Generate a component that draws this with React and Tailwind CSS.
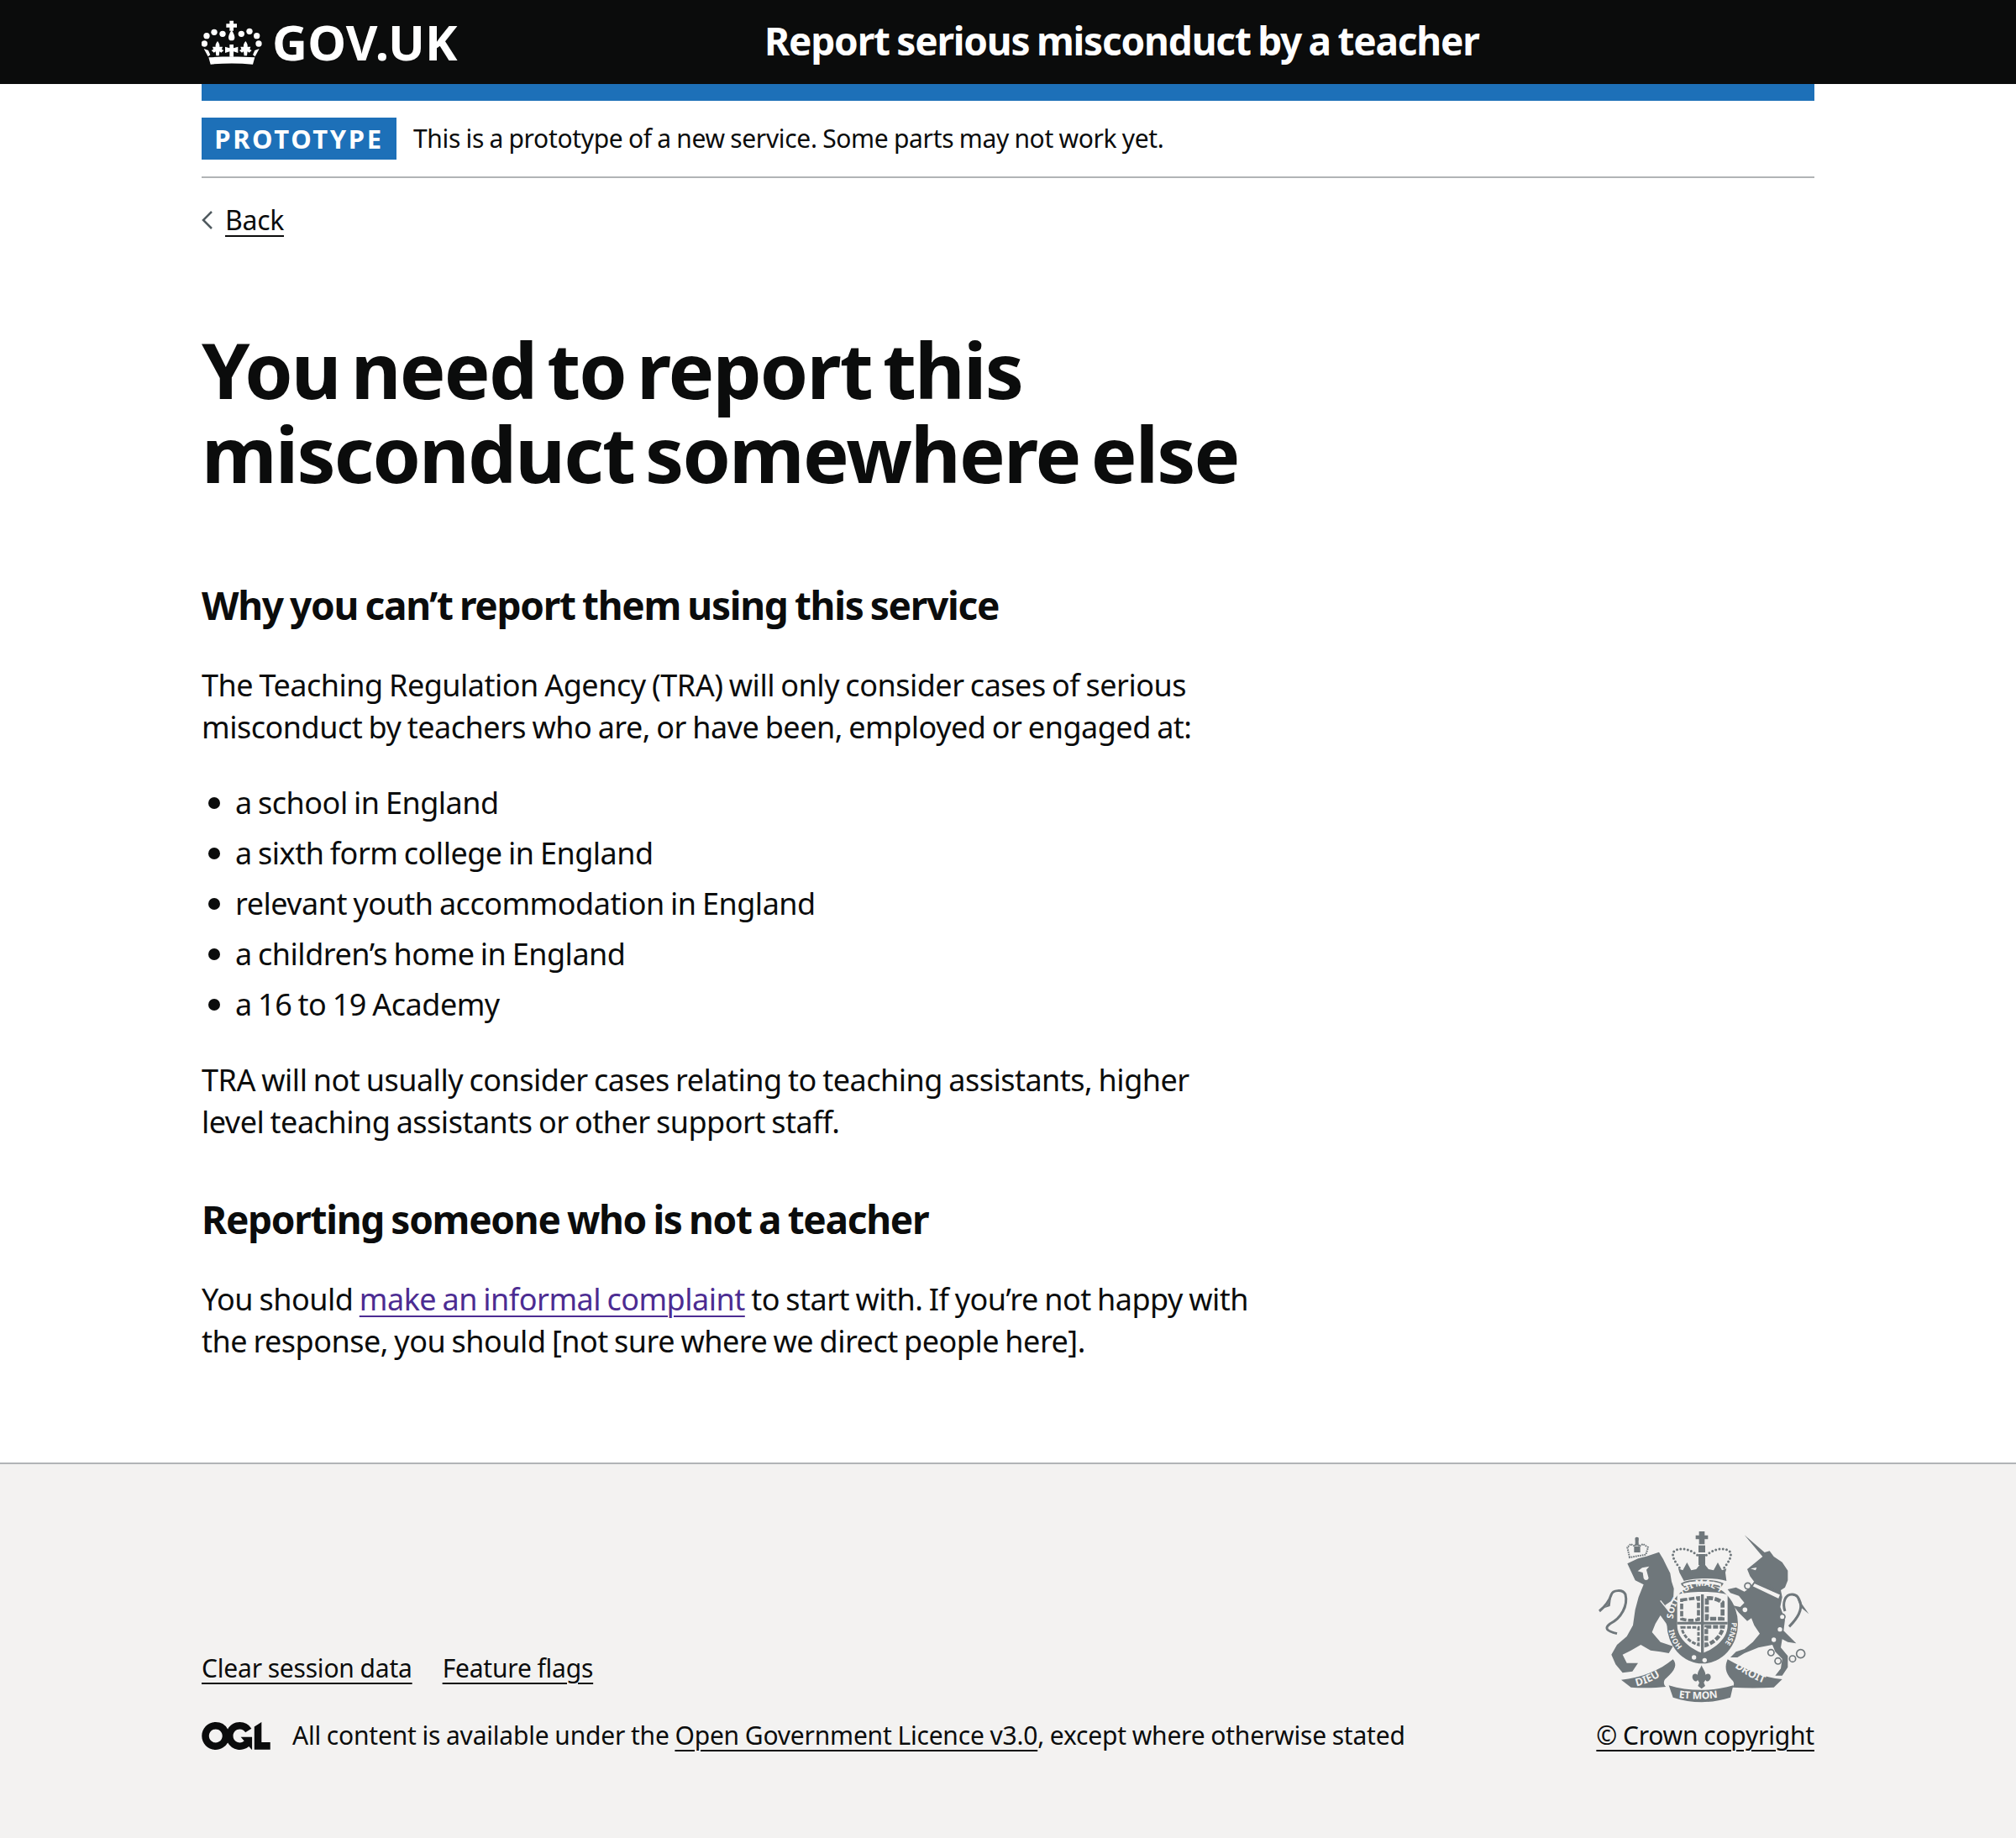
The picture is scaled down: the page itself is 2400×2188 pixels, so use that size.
const font = "font-['Noto_Sans','Open_Sans',sans-serif]";

function Crown() {
  return (
    <svg viewBox="60 60 216 165" className="w-[72px] h-[55px] shrink-0" fill="#fff">
      <path d="M160 65h14v11h12v13h-12v12h-14v-12h-12v-13h12z" />
      <path d="M167 98c8 12 11 20 11 27a11 11 0 0 1-22 0c0-7 3-15 11-27z" />
      <circle cx="78" cy="119" r="11" />
      <circle cx="105" cy="106" r="11" />
      <circle cx="135" cy="112" r="11" />
      <circle cx="202" cy="112" r="11" />
      <circle cx="231" cy="103" r="11" />
      <circle cx="257" cy="119" r="11" />
      <circle cx="70" cy="147" r="11" />
      <circle cx="264" cy="147" r="11" />
      {/* three fleurs */}
      <path d="M160 150h14v13l16-5v22l-16-5v19h-14v-19l-16 5v-22l16 5z" />
      <path d="M117 138c6 8 8 13 7 20l11 0-3 9 7 4-9 8-6-4-2 15h-10l-2-15-6 4-9-8 7-4-3-9 11 0c-1-7 1-12 7-20z" />
      <path d="M217 138c6 8 8 13 7 20l11 0-3 9 7 4-9 8-6-4-2 15h-10l-2-15-6 4-9-8 7-4-3-9 11 0c-1-7 1-12 7-20z" />
      {/* side leaves */}
      <path d="M68 165l16 6 7 16-8 6z" />
      <path d="M266 165l-16 6-7 16 8 6z" />
      {/* base */}
      <path d="M85 196c50-3 115-3 165 0l-7 25c-50-5-100-5-151 0z" />
    </svg>
  );
}

function OglLogo() {
  return (
    <svg viewBox="0 0 483.2 195.7" className="w-[82px] h-[33px] shrink-0" fill="#0b0c0c">
      <path d="M421.5 142.8V.1l-50.7 32.3v161.1h112.4v-50.7zm-122.3-9.6A47.12 47.12 0 0 1 221 97.8c0-26 21.1-47.1 47.1-47.1 16.7 0 31.4 8.7 39.7 21.8l42.7-27.2A97.63 97.63 0 0 0 268.1 0c-36.5 0-68.3 20.1-85.1 49.7A98 98 0 0 0 97.8 0C43.9 0 0 43.9 0 97.8s43.9 97.8 97.8 97.8c36.5 0 68.3-20.1 85.1-49.7a97.76 97.76 0 0 0 149.6 25.4l19.4 22.2h3v-87.8h-80l24.3 27.5zM97.8 145c-26 0-47.1-21.1-47.1-47.1s21.1-47.1 47.1-47.1 47.2 21 47.2 47S123.8 145 97.8 145" />
    </svg>
  );
}

// royal coat of arms, drawn roughly in the crop's coordinates
function Crest() {
  const dark = "#6f777b";
  const light = "#f3f2f1";
  return (
    <svg viewBox="60 60 780 630" className="w-[260px] h-[210px]" fill={dark}>
      <defs>
        <path id="garterTop" d="M335 395a105 125 0 0 1 210 0" />
        <path id="garterRight" d="M545 395a105 125 0 0 1-50 106" />
        <path id="garterLeft" d="M375 493a105 125 0 0 1-40-98" />
        <path id="ribLeft" d="M205 628c40-10 80-28 118-60" />
        <path id="ribRight" d="M555 560c40 28 75 48 118 62" />
        <path id="ribMid" d="M350 668c55 8 115 8 175-4" />
      </defs>

      {/* lion */}
      <path d="M172 190l38-18 30-8 45-15 15 25 12 25 13 25 5 30 8 25-2 40-30 20 30 45 16 35-6 22-22-8-14-30-20-28-18 30-12 30 30 35 45 15-15 25-30-5-35-5-35-20-35 20-30 15 15 30h40l-20 30-35 5-25-30-15-35 20-35 35-30 22-40 8-55 12-45 18-45-30-15z" />
      <path d="M135 440c-40-10-45-20-25-35 40-20 65-65 55-105-10-20-45-15-50 0-8 25-25 45-43 60" fill="none" stroke={dark} strokeWidth="9" />
      <path d="M80 352c15-5 28-20 35-50l-5 40z" />
      <path d="M225 205l25-5-10 12 8 30a10 12 0 0 1-18 0l-3-20-18-5z" fill={light} />
      <path d="M290 322l40 50" stroke={light} strokeWidth="4" />
      <path d="M180 168l-8-36 12-12 14 8 8-14 8 14 14-8 18 12-8 26z" fill="none" stroke={dark} strokeWidth="6" strokeDasharray="5 3" />
      <path d="M200 105h12v20h-12zM196 150h22v-22h-22z" />
      <circle cx="206" cy="102" r="7" />

      {/* crown over the shield */}
      <path d="M428 75h20v14h12v14h-12v18h-20v-18h-12v-14h12z" />
      <path d="M426 125h24v70h-24z" />
      <path d="M425 150h26v6h-26z" fill={light} />
      <path d="M358 205c-15-20-35-50-15-62 30-13 60 0 85 22M518 205c15-20 35-50 15-62-30-13-60 0-85 22" fill="none" stroke={dark} strokeWidth="9" strokeLinecap="round" strokeDasharray="0 13" />
      <path d="M358 222l-4-14 16 6 15-28 15 28 18-4 22-28 22 28 18 4 15-28 15 28 16-6-4 14 4 30c-40-12-112-12-152 0z" />
      <path d="M366 262c25-16 118-16 146 0l-8 12c-25-12-105-12-130 0z" fill={light} stroke={dark} strokeWidth="5" />

      {/* garter and shield */}
      <ellipse cx="440" cy="405" rx="127" ry="142" />
      <path d="M350 302c30-15 150-15 180 0v108c0 50-50 85-90 100-40-15-90-50-90-100z" fill={light} />
      <path d="M435 300h10v210h-10zM350 398h180v9H350z" />
      <path d="M366 320l60-8v78c-20 4-40 4-60-2z" fill="none" stroke={dark} strokeWidth="11" strokeDasharray="20 6" />
      <path d="M456 314c20-3 40 3 56 15v58h-56z" fill="none" stroke={dark} strokeWidth="14" strokeDasharray="22 6" />
      <path d="M366 418h60v62c-25-6-55-28-60-62z" fill="none" stroke={dark} strokeWidth="9" strokeDasharray="14 5" />
      <path d="M454 416h60c-5 30-30 55-60 65z" fill="none" stroke={dark} strokeWidth="13" strokeDasharray="18 6" />
      <g fill={light} fontFamily="Noto Sans, sans-serif" fontWeight="700" fontSize="32">
        <text><textPath href="#garterTop" startOffset="2%">SOIT QUI MAL Y</textPath></text>
        <text fontSize="26"><textPath href="#garterRight" startOffset="4%">PENSE</textPath></text>
        <text fontSize="26"><textPath href="#garterLeft" startOffset="8%">HONI</textPath></text>
      </g>
      <circle cx="410" cy="525" r="8" fill={light} />
      <circle cx="448" cy="535" r="8" fill={light} />

      {/* unicorn */}
      <path d="M590 88L662 150l18-5 15 20 30 20 20 30v35l-10 25-15 10 5 25-7 35 17 45-5 40 45 45-30-5-20-10-5 30 25 30v40l-20 30h-25l20-25 5-35-25-25-10-25-50 10-50 20-25 15h-25l20-20 30-10 30-25 25-30-20-30-10-25-15 10-30-30-20-25 25 5 15-15-20-25-30-10-10-13 30-7 30 15 15-10 20-25-15-20-10-25 25-20 30-25z" />
      <path d="M612 208l22-4-4 10z" fill={light} />
      <path d="M625 258l95 42-7 18-96-46z" fill={light} stroke={dark} strokeWidth="5" />
      <path d="M640 262l6-10 4 12 8-6 3 12 8-6 3 12 8-6 3 12 8-6 3 12 8-4" fill="none" stroke={dark} strokeWidth="4" />
      <path d="M735 360c-10-30 0-60 25-60 20 0 25 15 30 30 5 20-5 50-40 85" fill="none" stroke={dark} strokeWidth="9" />
      <path d="M775 305l45 65-30-25z" />
      <circle cx="602" cy="270" r="11" fill={light} stroke={dark} strokeWidth="5" />
      <circle cx="592" cy="355" r="11" fill={light} stroke={dark} strokeWidth="5" />
      <circle cx="725" cy="380" r="10" fill={light} stroke={dark} strokeWidth="5" />
      <circle cx="717" cy="425" r="8" fill={light} />
      <circle cx="695" cy="462" r="8" fill={light} />
      <circle cx="685" cy="508" r="11" fill={light} stroke={dark} strokeWidth="5" />
      <circle cx="710" cy="538" r="11" fill={light} stroke={dark} strokeWidth="5" />
      <circle cx="762" cy="530" r="11" fill={light} stroke={dark} strokeWidth="5" />
      <circle cx="791" cy="512" r="15" fill={light} stroke={dark} strokeWidth="5" />

      {/* motto ribbon */}
      <path d="M150 605c70-5 140-35 185-73 15 18 10 38-25 68-10 8-10 22 0 30-40 5-90 5-125 2z" />
      <path d="M725 603c-65-3-135-38-195-71-10 23-10 48 15 73 10 8 10 20 0 27 50 3 100 3 150 0z" />
      <path d="M320 625c70 22 160 22 230 0l-10 43c-70 22-135 22-205 0z" />
      <path d="M437 553c-4 12-14 22-14 34-14-10-26 5-14 20 6 6 12 4 14-2l6 10-5 12 13 10 13-10-5-12 6-10c2 6 8 8 14 2 12-15 0-30-14-20 0-12-10-22-14-34z" />
      <g fill={light} fontFamily="Noto Sans, sans-serif" fontWeight="700" fontSize="38">
        <text><textPath href="#ribLeft">DIEU</textPath></text>
        <text><textPath href="#ribRight">DROIT</textPath></text>
        <text fontSize="36"><textPath href="#ribMid" startOffset="3%">ET MON</textPath></text>
      </g>
    </svg>
  );
}

const items = [
  "a school in England",
  "a sixth form college in England",
  "relevant youth accommodation in England",
  "a children’s home in England",
  "a 16 to 19 Academy",
];

const body = "text-[36px] leading-[50px] tracking-[-0.5px] [word-spacing:-1.5px]";
const subheading = "text-[46px] leading-[60px] font-bold tracking-[-1.3px] [word-spacing:-2.3px]";
const link = "underline decoration-2 underline-offset-[6px]";

export default function App() {
  return (
    <div className={`${font} min-h-[2188px] flex flex-col bg-white text-[#0b0c0c]`}>
      <header className="h-[100px] bg-[#0b0c0c] text-white">
        <div className="w-[1920px] mx-auto h-full flex items-center">
          <div className="w-[670px] flex items-center gap-[12px] shrink-0">
            <Crown />
            <span className="text-[58px] leading-none font-bold tracking-[0.2px]">GOV.UK</span>
          </div>
          <span className="text-[46px] leading-[60px] font-bold tracking-[-1.2px] [word-spacing:-2.3px] relative -top-[2px]">Report serious misconduct by a teacher</span>
        </div>
      </header>

      <div className="w-[1920px] mx-auto h-[20px] bg-[#1d70b8]" />

      <div className="w-[1920px] mx-auto">
        <div className="py-[20px] flex items-center gap-[20px] border-b-2 border-[#b1b4b6]">
          <strong className="h-[50px] w-[232px] bg-[#1d70b8] text-white text-[31px] leading-[50px] text-center font-bold tracking-[2.6px]">PROTOTYPE</strong>
          <span className="text-[30px] leading-[40px] tracking-[-0.32px] [word-spacing:-1px]">This is a prototype of a new service. Some parts may not work yet.</span>
        </div>

        <a className="mt-[30px] flex items-center gap-[14px] text-[32px] leading-[40px] h-[40px] w-fit">
          <svg viewBox="0 0 14 24" className="w-[14px] h-[24px]" fill="none" stroke="#505a5f" strokeWidth="2.5"><path d="M12 2 2 12l10 10" /></svg>
          <span className={`${link} tracking-[-0.3px]`}>Back</span>
        </a>

        <main className="pt-[108px] pb-[119px] w-[1300px]">
          <h1 className="text-[92px] leading-[100px] font-bold tracking-[-1.85px] [word-spacing:-9px] mb-[100px]">
            You need to report this<br />misconduct somewhere else
          </h1>
          <h2 className={`${subheading} mb-[41px]`}>Why you can’t report them using this service</h2>
          <p className={`${body} mb-[40px]`}>
            The Teaching Regulation Agency (TRA) will only consider cases of serious<br />
            misconduct by teachers who are, or have been, employed or engaged at:
          </p>
          <ul className={`mb-[40px] flex flex-col gap-[10px] ${body}`}>
            {items.map((item) => (
              <li key={item} className="flex items-center">
                <span className="w-[14px] h-[14px] rounded-full bg-[#0b0c0c] ml-[8px] mr-[18px]" />
                {item}
              </li>
            ))}
          </ul>
          <p className={`${body} mb-[60px]`}>
            TRA will not usually consider cases relating to teaching assistants, higher<br />
            level teaching assistants or other support staff.
          </p>
          <h2 className={`${subheading} mb-[41px]`}>Reporting someone who is not a teacher</h2>
          <p className={body}>
            You should <a className={`text-[#4c2c92] ${link}`}>make an informal complaint</a> to start with. If you’re not happy with<br />
            the response, you should [not sure where we direct people here].
          </p>
        </main>
      </div>

      <footer className="flex-1 bg-[#f3f2f1] border-t-2 border-[#b1b4b6]">
        <div className="w-[1920px] mx-auto pt-[75px] flex justify-between items-end text-[30px] leading-[40px] tracking-[-0.2px] [word-spacing:-0.8px]">
          <div>
            <div className="flex gap-[36px] mb-[40px]">
              <a className={link}>Clear session data</a>
              <a className={link}>Feature flags</a>
            </div>
            <div className="flex items-center gap-[26px]">
              <OglLogo />
              <span>
                All content is available under the <a className={link}>Open Government Licence v3.0</a>, except where otherwise stated
              </span>
            </div>
          </div>
          <div className="flex flex-col items-end gap-[18px]">
            <Crest />
            <a className={link}>© Crown copyright</a>
          </div>
        </div>
      </footer>
    </div>
  );
}
